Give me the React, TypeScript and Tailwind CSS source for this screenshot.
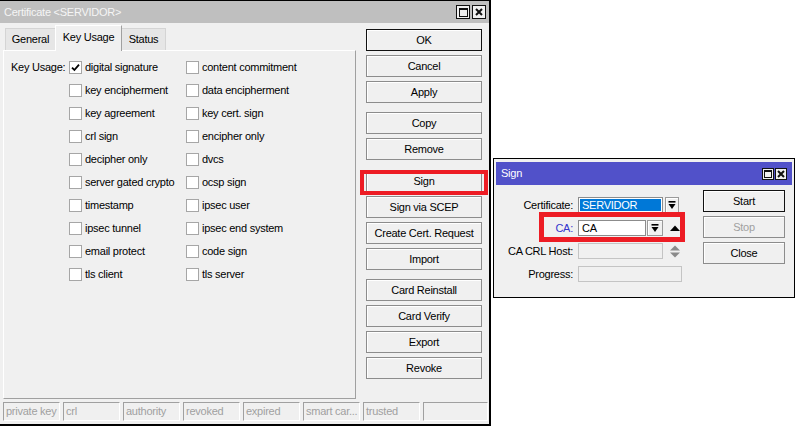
import React from "react";

const rows: [string, string][] = [
  ["digital signature", "content commitment"],
  ["key encipherment", "data encipherment"],
  ["key agreement", "key cert. sign"],
  ["crl sign", "encipher only"],
  ["decipher only", "dvcs"],
  ["server gated crypto", "ocsp sign"],
  ["timestamp", "ipsec user"],
  ["ipsec tunnel", "ipsec end system"],
  ["email protect", "code sign"],
  ["tls client", "tls server"],
];

const flags = ["private key", "crl", "authority", "revoked", "expired", "smart car...", "trusted"];

function Box({ checked }: { checked?: boolean }) {
  return (
    <span className="w-[13px] h-[13px] border border-[#a6a6a6] bg-white flex items-center justify-center shrink-0">
      {checked && (
        <svg width="9" height="9" viewBox="0 0 9 9">
          <path d="M1 4.6 L3.4 7 L8 1.6" fill="none" stroke="#000" strokeWidth="1.8" />
        </svg>
      )}
    </span>
  );
}

function Btn({
  children,
  def,
  disabled,
  className = "",
}: {
  children: React.ReactNode;
  def?: boolean;
  disabled?: boolean;
  className?: string;
}) {
  return (
    <div
      className={`h-[22px] flex items-center justify-center bg-[#f0f0f0] border shadow-[inset_1px_1px_0_#ffffff] ${
        def ? "border-[#111]" : "border-[#8c8c8c]"
      } ${disabled ? "text-[#a0a0a0]" : "text-black"} ${className}`}
    >
      {children}
    </div>
  );
}

function TitleButtons({ size }: { size: "lg" | "sm" }) {
  const box = size === "lg" ? "w-[14px] h-[14px]" : "w-[12px] h-[12px]";
  return (
    <div className={`ml-auto flex ${size === "lg" ? "gap-[2px]" : "gap-[1px]"}`}>
      <span className={`${box} border border-[#111] bg-[#f0f0f0] flex items-center justify-center`}>
        <span className={`${size === "lg" ? "w-[9px] h-[9px]" : "w-[8px] h-[8px]"} border border-[#111] border-t-2`} />
      </span>
      <span className={`${box} border border-[#111] bg-[#f0f0f0] flex items-center justify-center`}>
        <svg width="8" height="8" viewBox="0 0 8 8">
          <path d="M1 1 L7 7 M7 1 L1 7" stroke="#111" strokeWidth="2" />
        </svg>
      </span>
    </div>
  );
}

function DropIcon() {
  return (
    <svg width="8" height="9" viewBox="0 0 8 9">
      <rect x="0.5" y="0" width="7" height="1.6" fill="#000" />
      <path d="M0.5 3 L7.5 3 L4 8 Z" fill="#000" />
    </svg>
  );
}

function DropBtn({ className = "" }: { className?: string }) {
  return (
    <span
      className={`h-[16px] border border-[#9a9a9a] bg-[#f0f0f0] shadow-[inset_1px_1px_0_#fff] flex items-center justify-center ${className}`}
    >
      <DropIcon />
    </span>
  );
}

function MainWindow() {
  return (
    <div className="w-[491px] h-[426px] border-t border-r-2 border-b-2 border-black bg-[#f0f0f0] flex flex-col">
      <div className="h-[22px] bg-[#bfbfbf] flex items-center pl-[4px] pr-[3px] text-[#f5f5f5]">
        <span>Certificate &lt;SERVIDOR&gt;</span>
        <TitleButtons size="lg" />
      </div>
      <div className="flex flex-col pl-[3px]">
        <div className="flex">
          <div className="w-[353px] flex flex-col">
            {/* tabs */}
            <div className="h-[27px] flex items-end pl-[2px]">
              <div className="h-[22px] w-[50px] bg-[#e6e6e6] border-t border-l border-[#d4d4d4] flex items-center justify-center">
                General
              </div>
              <div className="h-[26px] w-[67px] bg-[#f0f0f0] border-t border-l border-white border-r border-r-[#a0a0a0] flex items-center justify-center -mb-px relative z-10 pb-[3px]">
                Key Usage
              </div>
              <div className="h-[22px] w-[44px] bg-[#e6e6e6] border-t border-r border-[#d4d4d4] flex items-center justify-center">
                Status
              </div>
            </div>
            {/* panel */}
            <div className="h-[349px] border-t border-l border-white border-r border-b border-r-[#a0a0a0] border-b-[#a0a0a0] pt-[5px] pl-[7px]">
              <div className="grid grid-cols-[58px_117px_1fr]">
                {rows.map(([a, b], i) => (
                  <React.Fragment key={a}>
                    <div className="h-[23px] flex items-center">{i === 0 ? "Key Usage:" : ""}</div>
                    <div className="h-[23px] flex items-center gap-[3px]">
                      <Box checked={i === 0} />
                      <span>{a}</span>
                    </div>
                    <div className="h-[23px] flex items-center gap-[3px]">
                      <Box />
                      <span>{b}</span>
                    </div>
                  </React.Fragment>
                ))}
              </div>
            </div>
          </div>
          {/* buttons */}
          <div className="w-[116px] ml-[10px] pt-[6px] flex flex-col">
            <div className="flex flex-col gap-[4px]">
              <Btn def>OK</Btn>
              <Btn>Cancel</Btn>
              <Btn>Apply</Btn>
            </div>
            <div className="flex flex-col gap-[4px] mt-[9px]">
              <Btn>Copy</Btn>
              <Btn>Remove</Btn>
            </div>
            <div className="flex flex-col gap-[4px] mt-[10px]">
              <Btn>Sign</Btn>
              <Btn>Sign via SCEP</Btn>
              <Btn>Create Cert. Request</Btn>
              <Btn>Import</Btn>
            </div>
            <div className="flex flex-col gap-[4px] mt-[9px]">
              <Btn>Card Reinstall</Btn>
              <Btn>Card Verify</Btn>
              <Btn>Export</Btn>
              <Btn>Revoke</Btn>
            </div>
          </div>
        </div>
        {/* status bar */}
        <div className="mt-[3px] flex gap-[3px] h-[19px]">
          {flags.map((f) => (
            <div
              key={f}
              className="w-[57px] border-t border-l border-[#a0a0a0] border-r border-b border-r-white border-b-white text-[#a0a0a0] pl-[2px] flex items-center whitespace-nowrap overflow-hidden"
            >
              {f}
            </div>
          ))}
          <div className="w-[65px] border-t border-l border-[#a0a0a0] border-r border-b border-r-white border-b-white" />
        </div>
      </div>
    </div>
  );
}

function SignWindow() {
  return (
    <div className="absolute left-[493px] top-[158px] w-[302px] h-[140px] border border-black bg-[#f0f0f0] px-[2px] pt-[3px] flex flex-col">
      <div className="h-[23px] bg-[#5151c9] flex items-center pl-[5px] pr-[5px] text-white">
        <span>Sign</span>
        <TitleButtons size="sm" />
      </div>
      <div className="flex">
        <div className="mt-[12px] grid grid-cols-[77px_auto] gap-x-[5px] gap-y-[7px]">
          <span className="h-[16px] flex items-center justify-end">Certificate:</span>
          <div className="flex items-center gap-[2px]">
            <span className="w-[85px] h-[16px] border border-[#8c8c8c] bg-white p-px flex">
              <span className="flex-1 bg-[#0078d7] text-white flex items-center pl-[2px]">SERVIDOR</span>
            </span>
            <DropBtn className="w-[14px]" />
          </div>

          <span className="h-[16px] flex items-center justify-end text-[#3434cc]">CA:</span>
          <div className="flex items-center gap-[1px]">
            <span className="w-[68px] h-[16px] border border-[#8c8c8c] bg-white flex items-center pl-[3px]">CA</span>
            <DropBtn className="w-[16px]" />
            <svg className="ml-[6px]" width="10" height="6" viewBox="0 0 10 6">
              <path d="M0 6 L5 0.5 L10 6 Z" fill="#000" />
            </svg>
          </div>

          <span className="h-[16px] flex items-center justify-end">CA CRL Host:</span>
          <div className="flex items-center">
            <span className="w-[85px] h-[16px] border border-[#c4c4c4] bg-[#f0f0f0]" />
            <svg className="ml-[7px]" width="10" height="13" viewBox="0 0 10 13">
              <path d="M0 5.5 L5 0.5 L10 5.5 Z" fill="#8a8a8a" />
              <path d="M0 7.5 L10 7.5 L5 12.5 Z" fill="#8a8a8a" />
            </svg>
          </div>

          <span className="h-[16px] flex items-center justify-end">Progress:</span>
          <div className="flex items-center">
            <span className="w-[104px] h-[16px] border border-[#c4c4c4] bg-[#f0f0f0]" />
          </div>
        </div>
        <div className="ml-auto mr-[7px] mt-[5px] w-[82px] flex flex-col gap-[4px]">
          <Btn def>Start</Btn>
          <Btn disabled>Stop</Btn>
          <Btn>Close</Btn>
        </div>
      </div>
    </div>
  );
}

export default function App() {
  return (
    <div className="relative w-[798px] h-[430px] bg-white overflow-hidden font-['Liberation_Sans',Arial,sans-serif] text-[11px] tracking-[-0.25px] text-black leading-none">
      <MainWindow />
      <SignWindow />
      {/* highlight boxes */}
      <div className="absolute left-[360px] top-[170px] w-[128px] h-[25px] border-4 border-[#ed1c24]" />
      <div className="absolute left-[539px] top-[212px] w-[146px] h-[30px] border-[5px] border-[#ed1c24]" />
    </div>
  );
}
